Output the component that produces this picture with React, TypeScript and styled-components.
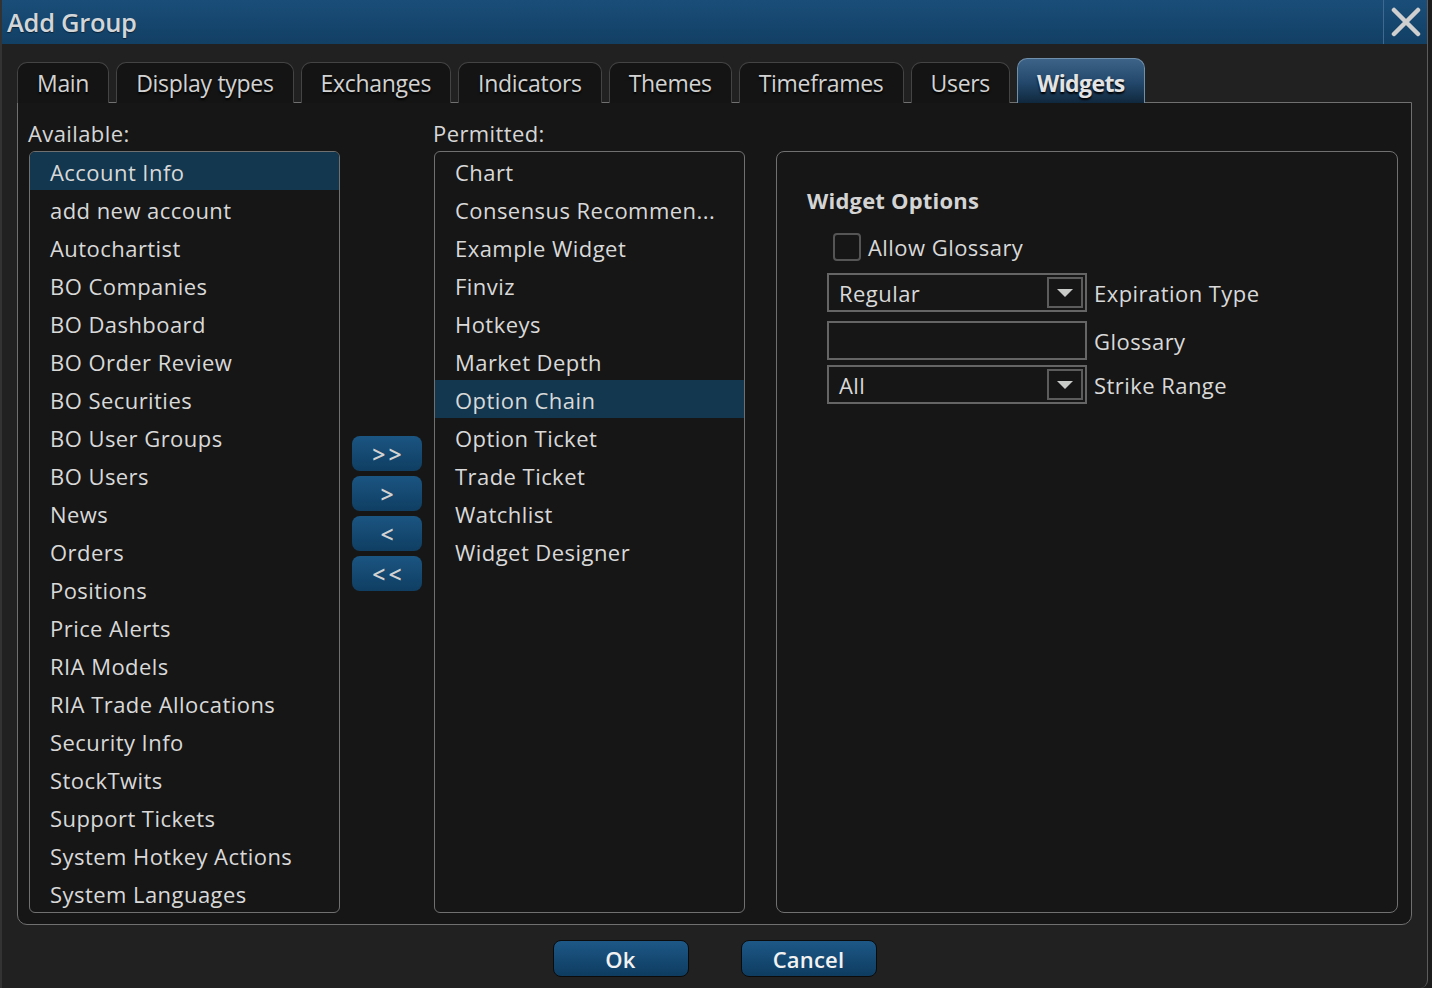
import React from "react";
import styled, { createGlobalStyle } from "styled-components";

const GlobalStyle = createGlobalStyle`
  html, body { margin: 0; padding: 0; background: #1c1c1c; }
  body { font-family: "Open Sans", "Noto Sans", sans-serif; }
  * { box-sizing: border-box; }
`;

const Dialog = styled.div`
  width: 1428px;
  height: 988px;
  background: #212121;
  border-left: 2px solid #333;
  border-right: 1px solid #5c5c5c;
  border-bottom-right-radius: 8px;
  display: flex;
  flex-direction: column;
  overflow: hidden;
`;

const TitleBar = styled.div`
  height: 44px;
  flex: none;
  display: flex;
  align-items: center;
  background: linear-gradient(#1a4e79, #123f64);
  padding-left: 5px;
`;

const Title = styled.div`
  flex: 1;
  color: #d3d6d9;
  font-size: 25.5px;
  font-weight: 600;
  text-shadow: 0 1px 1px #0a2236;
  letter-spacing: -0.3px;
`;

const CloseButton = styled.div`
  width: 44px;
  height: 44px;
  border-left: 1px solid #3d6a8e;
  display: flex;
  align-items: center;
  justify-content: center;
`;

const Body = styled.div`
  flex: 1;
  display: flex;
  flex-direction: column;
  padding: 14px 0 0 15px;
`;

const TabBar = styled.div`
  display: flex;
  align-items: flex-end;
  gap: 7px;
  height: 45px;
  position: relative;
  z-index: 1;
`;

const Tab = styled.div<{ $active?: boolean }>`
  height: ${(p) => (p.$active ? "45px" : "41px")};
  padding: 0 ${(p) => (p.$active ? "19px" : "19px")};
  display: flex;
  align-items: center;
  justify-content: center;
  border: 1px solid ${(p) => (p.$active ? "#6f8fab" : "#444")};
  border-bottom: none;
  border-radius: 10px 10px 0 0;
  background: ${(p) =>
    p.$active ? "linear-gradient(#3d6488, #22476a 55%, #10283d)" : "#141414"};
  color: ${(p) => (p.$active ? "#e4e4e4" : "#d2d2d2")};
  font-size: 23px;
  font-weight: ${(p) => (p.$active ? 700 : 400)};
  text-shadow: 0 2px 2px #000;
  letter-spacing: ${(p) => (p.$active ? "-0.6px" : "-0.3px")};
  padding-top: ${(p) => (p.$active ? "4px" : "0")};
`;

const TabPanel = styled.div`
  width: 1395px;
  height: 823px;
  margin-top: -1px;
  border: 1px solid #707070;
  border-radius: 0 0 10px 10px;
  background: #161616;
  display: grid;
  grid-template-columns: 311px 70px 311px 622px;
  column-gap: 12px;
  padding: 15px 11px 11px 11px;
`;

const Column = styled.div`
  display: flex;
  flex-direction: column;
  min-height: 0;
`;

const Label = styled.div`
  height: 33px;
  line-height: 30px;
  color: #d6d6d6;
  font-size: 22px;
  margin-left: -1px;
  letter-spacing: 0.4px;
`;

const ListBox = styled.div`
  flex: 1;
  border: 1px solid #707070;
  border-radius: 6px;
  overflow: hidden;
  display: flex;
  flex-direction: column;
`;

const Item = styled.div<{ $selected?: boolean }>`
  height: 38px;
  flex: none;
  line-height: 40px;
  padding-left: 20px;
  color: #d9d9d9;
  font-size: 22px;
  letter-spacing: 0.45px;
  white-space: nowrap;
  background: ${(p) => (p.$selected ? "#12374f" : "transparent")};
`;

const MoveColumn = styled.div`
  display: flex;
  flex-direction: column;
  gap: 5px;
  padding-top: 318px;
`;

const MoveButton = styled.div`
  height: 35px;
  border-radius: 8px;
  background: linear-gradient(#1b5582, #0f3e62);
  color: #d2d2d2;
  font-size: 23px;
  font-weight: 600;
  letter-spacing: 3px;
  padding-left: 3px;
  display: flex;
  align-items: center;
  justify-content: center;
`;

const OptionsColumn = styled.div`
  display: flex;
  flex-direction: column;
  padding-top: 33px;
  margin-left: 19px;
  width: 622px;
`;

const OptionsPanel = styled.div`
  flex: 1;
  border: 1px solid #707070;
  border-radius: 8px;
  padding: 33px 0 0 30px;
`;

const OptionsTitle = styled.div`
  color: #d4d4d4;
  font-size: 22px;
  font-weight: 700;
  line-height: 30px;
  letter-spacing: 0.2px;
`;

const Form = styled.div`
  display: flex;
  flex-direction: column;
  margin-left: 20px;
  margin-top: 17px;
  gap: 9px;
`;

const CheckRow = styled.div`
  display: flex;
  align-items: center;
  gap: 7px;
  padding-left: 6px;
  height: 30px;
  margin-bottom: 2px;
`;

const CheckBox = styled.div`
  width: 28px;
  height: 28px;
  border: 2px solid #555;
  border-radius: 4px;
`;

const FieldRow = styled.div<{ $tight?: boolean }>`
  display: flex;
  align-items: center;
  gap: 7px;
  margin-top: ${(p) => (p.$tight ? "-4px" : "0")};
`;

const FieldBox = styled.div`
  width: 260px;
  height: 39px;
  border: 2px solid #656565;
  display: flex;
  align-items: center;
  justify-content: space-between;
  padding: 0 2px 0 10px;
  color: #d9d9d9;
  font-size: 22px;
  letter-spacing: 0.45px;
`;

const DropButton = styled.div`
  width: 36px;
  height: 31px;
  border: 2px solid #5c5c5c;
  display: flex;
  align-items: center;
  justify-content: center;
`;

const FieldLabel = styled.div`
  color: #d9d9d9;
  font-size: 22px;
  letter-spacing: 0.45px;
`;

const Footer = styled.div`
  display: flex;
  justify-content: center;
  gap: 52px;
  padding-top: 15px;
  margin-left: -15px;
`;

const FooterButton = styled.div`
  width: 136px;
  height: 37px;
  border-radius: 8px;
  border: 1px solid #0b0b0b;
  background: linear-gradient(#1d5887, #0e3c60);
  color: #f2f2f2;
  font-size: 22px;
  font-weight: 600;
  display: flex;
  align-items: center;
  justify-content: center;
  letter-spacing: 0.2px;
`;

const Arrow = () => (
  <svg width="18" height="10" viewBox="0 0 18 10">
    <path d="M1 1 L17 1 L9 9 Z" fill="#c9cbc9" />
  </svg>
);

const tabs = [
  "Main",
  "Display types",
  "Exchanges",
  "Indicators",
  "Themes",
  "Timeframes",
  "Users",
  "Widgets",
];

const available = [
  "Account Info",
  "add new account",
  "Autochartist",
  "BO Companies",
  "BO Dashboard",
  "BO Order Review",
  "BO Securities",
  "BO User Groups",
  "BO Users",
  "News",
  "Orders",
  "Positions",
  "Price Alerts",
  "RIA Models",
  "RIA Trade Allocations",
  "Security Info",
  "StockTwits",
  "Support Tickets",
  "System Hotkey Actions",
  "System Languages",
];

const permitted = [
  "Chart",
  "Consensus Recommen...",
  "Example Widget",
  "Finviz",
  "Hotkeys",
  "Market Depth",
  "Option Chain",
  "Option Ticket",
  "Trade Ticket",
  "Watchlist",
  "Widget Designer",
];

export default function App() {
  return (
    <>
      <GlobalStyle />
      <Dialog>
        <TitleBar>
          <Title>Add Group</Title>
          <CloseButton>
            <svg width="30" height="30" viewBox="0 0 30 30">
              <path
                d="M3 3 L27 27 M27 3 L3 27"
                stroke="#cfcfcf"
                strokeWidth="4.5"
                strokeLinecap="round"
              />
            </svg>
          </CloseButton>
        </TitleBar>
        <Body>
          <TabBar>
            {tabs.map((t) => (
              <Tab key={t} $active={t === "Widgets"}>
                {t}
              </Tab>
            ))}
          </TabBar>
          <TabPanel>
            <Column>
              <Label>Available:</Label>
              <ListBox>
                {available.map((a, i) => (
                  <Item key={a} $selected={i === 0}>
                    {a}
                  </Item>
                ))}
              </ListBox>
            </Column>
            <MoveColumn>
              <MoveButton>&gt;&gt;</MoveButton>
              <MoveButton>&gt;</MoveButton>
              <MoveButton>&lt;</MoveButton>
              <MoveButton>&lt;&lt;</MoveButton>
            </MoveColumn>
            <Column>
              <Label>Permitted:</Label>
              <ListBox>
                {permitted.map((a) => (
                  <Item key={a} $selected={a === "Option Chain"}>
                    {a}
                  </Item>
                ))}
              </ListBox>
            </Column>
            <OptionsColumn>
              <OptionsPanel>
                <OptionsTitle>Widget Options</OptionsTitle>
                <Form>
                  <CheckRow>
                    <CheckBox />
                    <FieldLabel>Allow Glossary</FieldLabel>
                  </CheckRow>
                  <FieldRow>
                    <FieldBox>
                      Regular
                      <DropButton>
                        <Arrow />
                      </DropButton>
                    </FieldBox>
                    <FieldLabel>Expiration Type</FieldLabel>
                  </FieldRow>
                  <FieldRow>
                    <FieldBox />
                    <FieldLabel>Glossary</FieldLabel>
                  </FieldRow>
                  <FieldRow $tight>
                    <FieldBox>
                      All
                      <DropButton>
                        <Arrow />
                      </DropButton>
                    </FieldBox>
                    <FieldLabel>Strike Range</FieldLabel>
                  </FieldRow>
                </Form>
              </OptionsPanel>
            </OptionsColumn>
          </TabPanel>
          <Footer>
            <FooterButton>Ok</FooterButton>
            <FooterButton>Cancel</FooterButton>
          </Footer>
        </Body>
      </Dialog>
    </>
  );
}
